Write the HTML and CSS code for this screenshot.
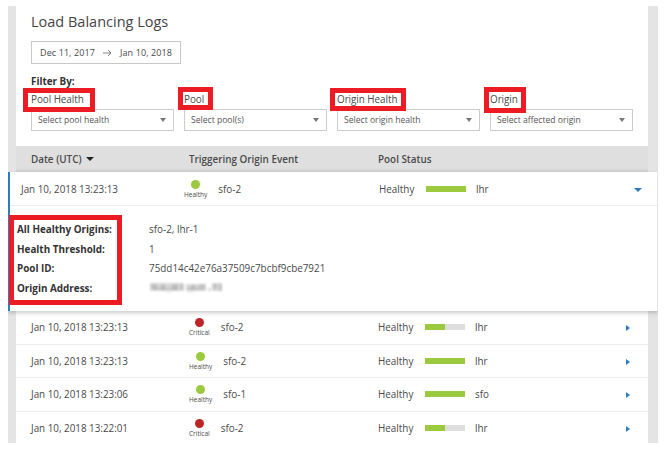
FILE: index.html
```html
<!DOCTYPE html>
<html lang="en">
<head>
<meta charset="utf-8">
<title>Load Balancing Logs</title>
<link rel="stylesheet" href="styles.css">
</head>
<body>
<main class="frame">
  <section class="panel">
    <header class="controls">
      <h1>Load Balancing Logs</h1>
      <div class="range"><span>Dec 11, 2017</span>
        <svg width="9" height="8" viewBox="0 0 9 8"><path d="M0 4H8M5 1L8 4L5 7" fill="none" stroke="#666" stroke-width=".8"/></svg>
        <span>Jan 10, 2018</span></div>
      <p class="filter-by">Filter By:</p>
      <div class="filters">
        <div class="filter"><label>Pool Health<i class="mark m1"></i></label><div class="select"><span>Select pool health</span><b class="caret"></b></div></div>
        <div class="filter"><label>Pool<i class="mark m2"></i></label><div class="select"><span>Select pool(s)</span><b class="caret"></b></div></div>
        <div class="filter"><label>Origin Health<i class="mark m3"></i></label><div class="select"><span>Select origin health</span><b class="caret"></b></div></div>
        <div class="filter"><label>Origin<i class="mark m4"></i></label><div class="select"><span>Select affected origin</span><b class="caret"></b></div></div>
      </div>
    </header>
    <div class="thead"><span>Date (UTC)<b class="sort"></b></span><span>Triggering Origin Event</span><span>Pool Status</span></div>
  </section>
  <section class="expanded">
    <div class="row open">
      <span class="date">Jan 10, 2018 13:23:13</span>
      <div class="event"><div class="health"><i class="dot"></i><small>Healthy</small></div><span>sfo-2</span></div>
      <span>Healthy</span><span class="bar"><i class="full"></i></span><span class="region">lhr</span><b class="down"></b>
    </div>
    <dl class="details">
      <dt>All Healthy Origins:</dt><dd>sfo-2, lhr-1</dd>
      <dt>Health Threshold:</dt><dd>1</dd>
      <dt>Pool ID:</dt><dd>75dd14c42e76a37509c7bcbf9cbe7921</dd>
      <dt>Origin Address:</dt><dd><svg class="redacted" width="75" height="13" viewBox="0 0 75 13"><g fill="#777"><path opacity=".28" d="M1 2h34v8H1zM37 3h20v7H37zM59 7h3v3h-3zM63 2h10v8H63z"/><path opacity=".22" d="M2 3h6v5H2zM12 3h4v6h-4zM23 3h6v6h-6zM31 3h3v6h-3zM42 4h4v5h-4zM50 3h6v6h-6zM64 3h4v5h-4zM70 3h3v7h-3z"/><path opacity=".16" d="M4 6h12v3H4zM16 6h13v3H16zM38 6h13v3H38z"/><path opacity=".1" d="M17 10h6v2h-6zM38 10h6v2h-6z"/></g></svg></dd>
    </dl>
    <i class="mark m5"></i>
  </section>
  <section class="panel rows">
    <div class="row">
      <span class="date">Jan 10, 2018 13:23:13</span>
      <div class="event"><div class="health critical"><i class="dot"></i><small>Critical</small></div><span>sfo-2</span></div>
      <span>Healthy</span><span class="bar"><i class="half"></i></span><span class="region">lhr</span><b class="right"></b>
    </div>
    <div class="row">
      <span class="date">Jan 10, 2018 13:23:13</span>
      <div class="event"><div class="health"><i class="dot"></i><small>Healthy</small></div><span>sfo-2</span></div>
      <span>Healthy</span><span class="bar"><i class="full"></i></span><span class="region">lhr</span><b class="right"></b>
    </div>
    <div class="row">
      <span class="date">Jan 10, 2018 13:23:06</span>
      <div class="event"><div class="health"><i class="dot"></i><small>Healthy</small></div><span>sfo-1</span></div>
      <span>Healthy</span><span class="bar"><i class="full"></i></span><span class="region">sfo</span><b class="right"></b>
    </div>
    <div class="row">
      <span class="date">Jan 10, 2018 13:22:01</span>
      <div class="event"><div class="health critical"><i class="dot"></i><small>Critical</small></div><span>sfo-2</span></div>
      <span>Healthy</span><span class="bar"><i class="half"></i></span><span class="region">lhr</span><b class="right"></b>
    </div>
  </section>
</main>
</body>
</html>
```
FILE: styles.css
```css
* { box-sizing: border-box; }
body { margin: 0; background: #fff; color: #4a4a4a; font: 9.9px/14px "Open Sans", sans-serif; white-space: nowrap; }
.frame { width: 650px; height: 437px; margin: 6px 0 0 8px; background: #e4e4e4; overflow: hidden; }
.panel { width: 632px; margin-left: 8px; background: #fff; }
.controls { height: 140px; padding: 6px 15px 0; }
h1 { margin: 0; font-size: 14.5px; line-height: 20px; font-weight: 400; color: #444; }
.range { display: flex; align-items: center; width: 150px; height: 23px; margin-top: 9px; padding-left: 8px; border: 1px solid #c8c8c8; font-size: 9px; letter-spacing: .1px; }
.range svg { margin: 0 8px; }
.filter-by { margin: 11px 0 0; font-weight: 700; line-height: 13px; color: #333; }
.filters { display: grid; grid-template-columns: repeat(4, 143px); gap: 10px; margin-top: 4px; }
label { display: block; position: relative; width: max-content; height: 17px; line-height: 15px; letter-spacing: -.05px; }
.select { display: flex; align-items: center; justify-content: space-between; height: 22px; padding: 0 7px 0 6px; border: 1px solid #ccc; font-size: 8.6px; color: #555; }
.caret { border: 3px solid transparent; border-top: 4px solid #777; border-bottom: 0; }
.mark { position: absolute; border: 5px solid #ed1c24; }
.m1 { left: -8px; top: -4px; width: 72px; height: 24px; }
.m2 { left: -6px; top: -5px; width: 35px; height: 23px; }
.m3 { left: -7px; top: -4px; width: 76px; height: 23px; }
.m4 { left: -6px; top: -5px; width: 42px; height: 26px; }
.m5 { left: -1px; top: 43px; width: 113px; height: 90px; }
.thead { display: grid; grid-template-columns: 158px 189px 1fr; height: 26px; padding-left: 15px; align-items: center; background: linear-gradient(#dfdfdf 85%, #cecece); font-weight: 600; }
.sort { display: inline-block; margin-left: 4px; border: 4px solid transparent; border-top: 4px solid #222; border-bottom: 0; vertical-align: 2px; }
.expanded { position: relative; width: 650px; height: 139px; border-left: 2px solid #2f7bbf; border-right: 1px solid #e4e4e4; background: #fff; box-shadow: 0 2px 4px rgba(0,0,0,.2); }
.row { display: grid; grid-template-columns: 158px 189px 47px 40px 10px 151px 1fr; align-items: center; height: 33.5px; padding-left: 15px; border-bottom: 1px solid #ececec; }
.row.open { padding-left: 11px; height: 34px; grid-template-columns: 163px 195px 47px 40px 10px 158px 1fr; }
.rows .row:last-child { border: 0; }
.date { letter-spacing: -.02px; }
.event { display: flex; align-items: center; gap: 11px; }
.health { display: flex; flex-direction: column; align-items: center; padding-top: 1px; }
.dot { width: 9px; height: 9px; border-radius: 50%; background: #9bca3e; }
.critical .dot { background: #bd2527; }
small { margin: 1px 0 -1px; font-size: 6.5px; line-height: 10px; }
.bar { display: flex; height: 6px; background: #dedede; }
.bar i { background: #9bca3e; }
.full { width: 100%; }
.half { width: 50%; }
.region { grid-column: 6; }
.right { justify-self: start; margin-top: 2px; border: 3.5px solid transparent; border-left: 4px solid #2f7bbf; border-right: 0; }
.down { justify-self: start; margin-top: 2px; border: 4px solid transparent; border-top: 4px solid #2f7bbf; border-bottom: 0; }
.details { display: grid; grid-template-columns: 132px 1fr; grid-auto-rows: 19.7px; align-items: center; margin: 0; padding: 13px 0 0 7px; }
dt { font-weight: 700; color: #333; }
dd { margin: 0; }
.redacted { display: block; filter: blur(.9px); }
```
